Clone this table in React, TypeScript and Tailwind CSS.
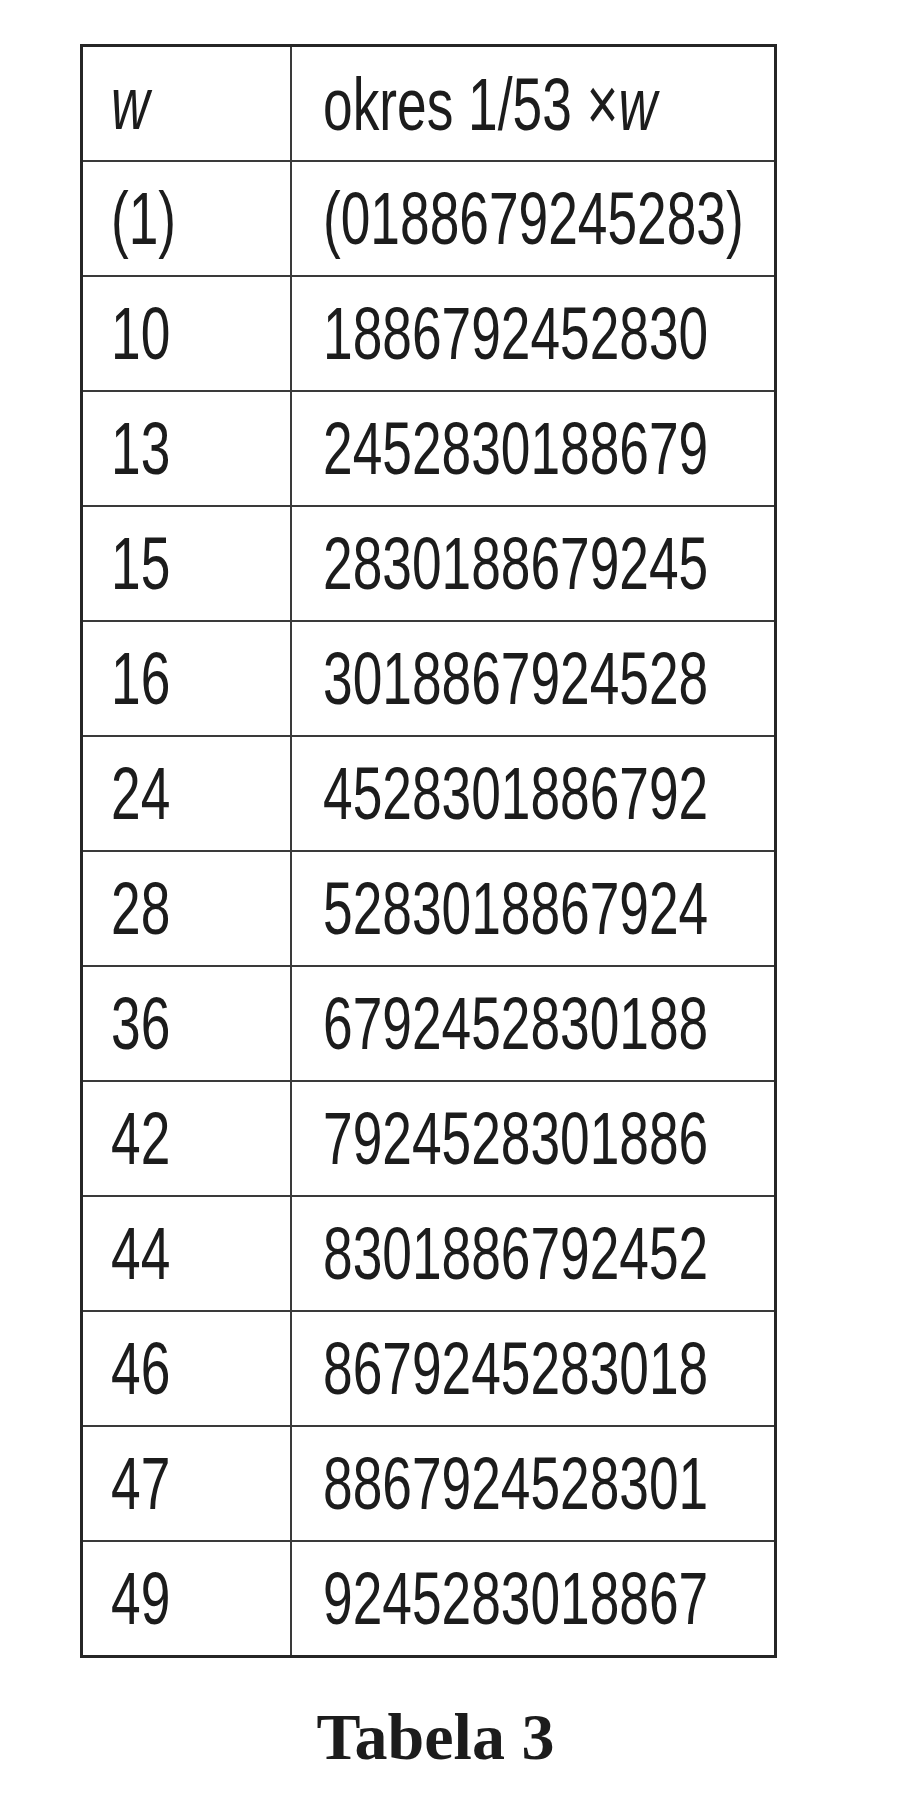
const rows: [string, string][] = [
  ['(1)', '(0188679245283)'],
  ['10', '1886792452830'],
  ['13', '2452830188679'],
  ['15', '2830188679245'],
  ['16', '3018867924528'],
  ['24', '4528301886792'],
  ['28', '5283018867924'],
  ['36', '6792452830188'],
  ['42', '7924528301886'],
  ['44', '8301886792452'],
  ['46', '8679245283018'],
  ['47', '8867924528301'],
  ['49', '9245283018867'],
];

function Cell({ children, first }: { children: React.ReactNode; first?: boolean }) {
  return (
    <div
      className={
        first
          ? 'flex h-full items-center border-r-2 border-[#3a3a3a] pl-[28px]'
          : 'flex h-full items-center pl-[31px]'
      }
    >
      <span className="block origin-left scale-x-[0.72] whitespace-nowrap text-[74px] leading-none">
        {children}
      </span>
    </div>
  );
}

export default function App() {
  return (
    <div className="min-h-[1809px] bg-white pl-[80px] pt-[44px] text-[#1c1c1c] [font-family:'Liberation_Sans',Arial,sans-serif]">
      <div className="w-[697px]">
        {/* Table */}
        <div className="border-[3px] border-[#262626]">
          <div className="grid h-[115px] grid-cols-[209px_1fr] border-b-2 border-[#3a3a3a]">
            <Cell first>
              <i>w</i>
            </Cell>
            <Cell>
              okres 1/53 <span className="text-[76px]">×</span>
              <i>w</i>
            </Cell>
          </div>
          {rows.map(([w, period], i) => (
            <div
              key={w}
              className={
                i === rows.length - 1
                  ? 'grid h-[113px] grid-cols-[209px_1fr]'
                  : 'grid h-[115px] grid-cols-[209px_1fr] border-b-2 border-[#3a3a3a]'
              }
            >
              <Cell first>{w}</Cell>
              <Cell>{period}</Cell>
            </div>
          ))}
        </div>

        {/* Caption */}
        <p className="mt-[46px] pl-[14px] text-center text-[66px] font-bold leading-none [font-family:'Liberation_Serif','Times_New_Roman',serif]">
          Tabela 3
        </p>
      </div>
    </div>
  );
}
